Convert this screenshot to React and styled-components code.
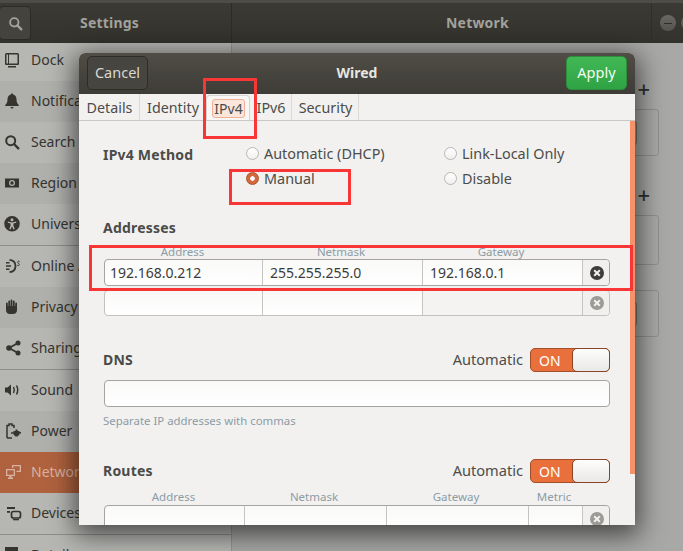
import React from "react";
import styled, { createGlobalStyle } from "styled-components";

const GlobalStyle = createGlobalStyle`
	html, body {
		margin: 0;
		padding: 0;
		background: #a8a8a6;
	}

	* {
		box-sizing: border-box;
	}
`;

const Screen = styled.div`
	position: relative;
	width: 683px;
	height: 551px;
	overflow: hidden;
	font-family: "Noto Sans", "Open Sans", sans-serif;
	font-size: 14px;
	color: #4c4c4a;
`;

const SettingsWindow = styled.div`
	width: 700px;
	height: 551px;
	display: flex;
	flex-direction: column;
	border-top: 3px solid #4d4c48;
`;

const TitleBar = styled.header`
	height: 40px;
	flex-shrink: 0;
	display: flex;
	background: linear-gradient( #3b3a35, #33322d );
	color: #a3a29b;
	font-weight: 700;
`;

const TitleLeft = styled.div`
	width: 232px;
	display: flex;
	align-items: center;
	border-right: 1px solid #2c2b27;
`;

const SearchButton = styled.div`
	width: 32px;
	height: 34px;
	margin-left: -1px;
	display: flex;
	align-items: center;
	justify-content: center;
	background: #45433e;
	border: 1px solid #2b2a26;
	border-radius: 4px;
`;

const TitleText = styled.span`
	margin: -2px 0 0 ${ props => props.$offset }px;
	letter-spacing: 0.2px;
`;

const TitleRight = styled.div`
	flex: 1;
	display: flex;
	align-items: center;
	justify-content: space-between;
`;

const WindowControls = styled.div`
	height: 100%;
	display: flex;
	align-items: center;
	gap: 5px;
	padding: 0 3px 0 8px;
	border-left: 1px solid #2f2e2a;
`;

const WindowButton = styled.div`
	width: 16px;
	height: 16px;
	border-radius: 50%;
	display: flex;
	align-items: center;
	justify-content: center;
	background: linear-gradient( #6a6862, #55534d );
`;

const MinimizeMark = styled.span`
	width: 8px;
	height: 1px;
	background: #2e2d29;
`;

const Body = styled.div`
	flex: 1;
	display: flex;
	min-height: 0;
`;

const Sidebar = styled.nav`
	width: 232px;
	flex-shrink: 0;
	overflow: hidden;
	background: #b6b6b3;
	border-right: 1px solid #96968f;
`;

// The list is scrolled down by a few pixels in the screenshot.
const SidebarList = styled.div`
	margin-top: -3px;
`;

const rowBackground = props => {
	if ( props.$selected ) {
		return "#b0623f";
	}
	return props.$tinted ? "#afafac" : "transparent";
};

const SidebarRow = styled.div`
	height: ${ props => props.$divided ? 42 : 41 }px;
	display: flex;
	align-items: center;
	gap: 12px;
	padding: 0 5px 2px;
	color: ${ props => props.$selected ? "#d8b2a0" : "#35342f" };
	background: ${ rowBackground };
	border-bottom: ${ props => props.$divided ? "1px solid #8f8f8a" : "none" };
`;

const RowIcon = styled.svg`
	width: 14px;
	height: 16px;
	flex-shrink: 0;
	overflow: visible;
	fill: currentColor;
	stroke: none;
`;

const RowChevron = styled.span`
	margin-left: auto;
	margin-right: 18px;
`;

const Main = styled.main`
	flex: 1;
	padding-top: 39px;
	background: #a8a8a6;
`;

const BackColumn = styled.div`
	width: 427px;
	display: flex;
	flex-direction: column;
`;

const PlusRow = styled.div`
	height: 14px;
	margin-top: ${ props => props.$gap }px;
	margin-bottom: 13px;
	padding: 0 9px 2px 0;
	display: flex;
	justify-content: flex-end;
	align-items: center;
	color: #2f2f2c;
	font-size: 22px;
	font-weight: 500;
`;

const BackPanel = styled.div`
	height: ${ props => props.$height }px;
	margin-top: ${ props => props.$gap || 0 }px;
	display: flex;
	align-items: center;
	justify-content: flex-end;
	padding-right: 21px;
	border: 1px solid #8f8f8c;
	border-radius: 3px;
`;

const BackButton = styled.div`
	width: 20px;
	height: 24px;
	border: 1px solid #77776f;
	border-radius: 3px;
`;

const Dialog = styled.section`
	position: absolute;
	left: 79px;
	top: 53px;
	width: 556px;
	height: 472px;
	display: flex;
	flex-direction: column;
	overflow: hidden;
	border-radius: 6px 6px 0 0;
	background: #f2f1ef;
	box-shadow: 0 6px 26px 4px rgba( 0, 0, 0, 0.6 );
`;

const DialogHeader = styled.header`
	height: 41px;
	flex-shrink: 0;
	display: flex;
	align-items: center;
	justify-content: space-between;
	padding: 0 8px;
	background: linear-gradient( #504d46, #3e3c37 );
`;

const HeaderButton = styled.button`
	width: 61px;
	height: 34px;
	padding: 0 0 2px;
	margin-top: -2px;
	font: inherit;
	font-size: 14.5px;
	color: ${ props => props.$suggested ? "#f4fbf3" : "#d9d8d3" };
	background: ${ props => props.$suggested ? "linear-gradient( #41b854, #2fa344 )" : "#47453f" };
	border: 1px solid ${ props => props.$suggested ? "#2d8f3c" : "#2d2c28" };
	border-radius: 5px;
`;

const DialogTitle = styled.h2`
	margin: -2px 0 0;
	font-size: 14px;
	font-weight: 700;
	color: #e6e5e0;
`;

const TabBar = styled.div`
	height: 27px;
	flex-shrink: 0;
	display: flex;
	background: #f2f1ef;
	border-bottom: 1px solid #c9c8c4;
`;

const Tab = styled.div`
	width: ${ props => props.$width }px;
	display: flex;
	align-items: center;
	justify-content: center;
	padding-left: 1px;
	font-size: 14.3px;
	border-right: 1px solid #dbdad6;
	${ props => props.$active ? `
		margin-top: 1px;
		background: #f8f7f6;
		border: 1px solid #d5d4d0;
		border-bottom: none;
		border-radius: 4px 4px 0 0;
	` : "" }
`;

const TabFocus = styled.span`
	padding: 0 1px;
	line-height: 17px;
	background: #fbe6dc;
	border: 1px solid #f1b094;
	border-radius: 3px;
	font-size: 14px;
`;

const Form = styled.div`
	flex: 1;
	min-height: 0;
	padding: 20px 25px 0 24px;
	overflow: hidden;
`;

const ScrollThumb = styled.div`
	position: absolute;
	right: 0;
	top: 68px;
	width: 5px;
	height: 353px;
	background: #f5926a;
`;

const MethodGrid = styled.div`
	display: grid;
	grid-template-columns: 143px 198px 1fr;
	grid-auto-rows: 25px;
	align-items: center;
`;

const SectionTitle = styled.h3`
	margin: 0;
	font-size: 14px;
	line-height: 20px;
	font-weight: 700;
	color: #4b4b49;
	letter-spacing: 0.2px;
`;

const MethodTitle = styled( SectionTitle )`
	margin-top: 3px;
`;

const Addresses = styled( SectionTitle )`
	margin-top: 27px;
`;

const RadioOption = styled.label`
	display: flex;
	align-items: center;
	gap: 5px;
	font-size: 14.4px;
	grid-column: ${ props => props.$column };
`;

const RadioDot = styled.span`
	width: 13px;
	height: 13px;
	flex-shrink: 0;
	border-radius: 50%;
	background: ${ props => props.$checked ? "radial-gradient( circle, #fff 0 2px, #d4683a 2.5px )" : "linear-gradient( #fff, #f1f0ee )" };
	border: 1px solid ${ props => props.$checked ? "#a9522c" : "#b7b6b2" };
`;

const ColumnLabels = styled.div`
	display: grid;
	grid-template-columns: ${ props => props.$columns };
	height: 14px;
	margin: 7px 0 0 1px;
	font-size: 11.5px;
	line-height: 14px;
	text-align: center;
	color: #8c9ca6;
`;

const EntryRow = styled.div`
	display: grid;
	grid-template-columns: ${ props => props.$columns };
	height: ${ props => props.$height }px;
	margin: ${ props => props.$gap }px 0 0 1px;
	background: linear-gradient( #f9f9f8, #ffffff );
	border: 1px solid ${ props => props.$faded ? "#c2c1bd" : "#a5a4a0" };
	border-radius: 4px;
`;

const EntryCell = styled.div`
	display: flex;
	align-items: center;
	padding-left: ${ props => props.$first ? 5 : 7 }px;
	font-size: 14px;
	color: #3c3c3a;
	background: ${ props => props.$muted ? "#f4f3f2" : "transparent" };
	border-left: ${ props => props.$first ? "none" : "1px solid #c5c4c0" };
`;

const RemoveCell = styled.div`
	display: flex;
	align-items: center;
	justify-content: center;
	padding-left: 1px;
	background: #f1f0ee;
	border-left: 1px solid #c5c4c0;
	border-radius: 0 4px 4px 0;
`;

const RemoveIcon = styled.span`
	width: 14px;
	height: 14px;
	border-radius: 50%;
	display: flex;
	align-items: center;
	justify-content: center;
	background: ${ props => props.$faded ? "#9c9b97" : "#3c3c3a" };
	color: #f1f0ee;
`;

const SwitchRow = styled.div`
	display: flex;
	align-items: center;
	justify-content: space-between;
	height: 24px;
	margin: ${ props => props.$gap }px 0 0;
`;

const SwitchGroup = styled.div`
	display: flex;
	align-items: center;
	gap: 7px;
	font-size: 14.6px;
`;

const SwitchLabel = styled.span`
	margin-top: -2px;
`;

const Toggle = styled.div`
	width: 80px;
	height: 24px;
	display: flex;
	align-items: center;
	justify-content: space-between;
	padding-left: 8px;
	font-size: 14px;
	color: #fff;
	background: #e9703a;
	border: 1px solid #a04f2a;
	border-radius: 5px;
`;

const ToggleKnob = styled.span`
	width: 38px;
	height: 24px;
	margin-right: -1px;
	background: linear-gradient( #fdfdfc, #e9e8e6 );
	border: 1px solid #8a4426;
	border-radius: 5px;
`;

const HelpText = styled.div`
	height: 14px;
	margin-top: 7px;
	font-size: 11.4px;
	line-height: 14px;
	color: #8c9ca6;
`;

// Red boxes somebody drew on top of the screenshot.
const Annotation = styled.div`
	position: absolute;
	left: ${ props => props.$left }px;
	top: ${ props => props.$top }px;
	width: ${ props => props.$width }px;
	height: ${ props => props.$height }px;
	border: 3px solid #f93636;
`;

const ADDRESS_COLUMNS = "157px 160px 160px 1fr";
const ROUTE_COLUMNS = "139px 142px 142px 54px 1fr";

function DockIcon() {
	return (
		<RowIcon viewBox="0 0 14 16">
			<path fillRule="evenodd" d="M0 2.5A1.5 1.5 0 0 1 1.5 1h11A1.5 1.5 0 0 1 14 2.5V12a1 1 0 0 1-1 1H1a1 1 0 0 1-1-1zM1.5 2.5V11.5H3V2.5zM4 2.5V11.5H12.5V2.5zM3 14h8v1.5H3z" />
		</RowIcon>
	);
}

function BellIcon() {
	return (
		<RowIcon viewBox="0 0 14 16">
			<path d="M7 .5c.7 0 1.2.5 1.2 1.1C10.500 2.200 11.500 4 11.500 6.500c0 2.800.8 4.300 2.300 5.500v1H.2v-1c1.500-1.200 2.300-2.700 2.300-5.500C2.500 4 3.500 2.200 5.800 1.600 5.800 1 6.300.5 7 .5zM5.500 14h3a1.500 1.500 0 0 1-3 0z" />
		</RowIcon>
	);
}

function SearchIcon( { size = 14 } ) {
	return (
		<RowIcon viewBox="0 0 14 16" style={ { width: size, height: size + 2 } }>
			<circle cx="5.700" cy="6.700" r="4.500" fill="none" stroke="currentColor" strokeWidth="2" />
			<path d="M9 10l4.300 4.300" stroke="currentColor" strokeWidth="2.400" strokeLinecap="round" />
		</RowIcon>
	);
}

function RegionIcon() {
	return (
		<RowIcon viewBox="0 0 14 16">
			<path fillRule="evenodd" d="M0 3.500h14v9H0zM7 5a3 3 0 1 0 0 6 3 3 0 0 0 0-6zM7 6.300a1.700 1.700 0 1 1 0 3.400 1.700 1.700 0 0 1 0-3.400z" />
		</RowIcon>
	);
}

function UniversalIcon() {
	return (
		<RowIcon viewBox="0 0 14 16" style={ { width: 16, marginLeft: -1, marginRight: -1 } }>
			<path fillRule="evenodd" d="M7 0a7.500 7.500 0 1 1 0 15.500A7.500 7.500 0 0 1 7 0zM7 2.300a1.500 1.500 0 1 0 0 3 1.500 1.500 0 0 0 0-3zM2.800 5.500v1.300l2.800.8v2L4.300 13l1.200.4L7 10.200l1.500 3.200 1.200-.4-1.300-3.400v-2l2.800-.8V5.500L7 6.400z" />
		</RowIcon>
	);
}

function OnlineIcon() {
	return (
		<RowIcon viewBox="0 0 14 16" style={ { width: 16, marginRight: -2 } }>
			<path d="M0 4h3.500v1.500H0zM0 10.500h3.500V12H0zM0 7.200h5v1.500H0z" />
			<path d="M3.500 1.800C7.800 2.200 9.500 5 9.500 8s-1.700 5.800-6 6.200" fill="none" stroke="currentColor" strokeWidth="1.800" />
			<path d="M13.500 3.500c-1-.6-2-.2-1.800.8.200.9 1.800 1.200 1.600 2.400-.1 1-1.200 1.100-2.100.6" fill="none" stroke="currentColor" strokeWidth="1" />
		</RowIcon>
	);
}

function PrivacyIcon() {
	return (
		<RowIcon viewBox="0 0 14 16">
			<path d="M1 4.500a.9.900 0 0 1 1.800 0V7h.5V2.500a.9.900 0 0 1 1.800 0V7h.5V1.500a.9.900 0 0 1 1.800 0V7h.5V2.500a.9.900 0 0 1 1.800 0V7h.5V4.500a.9.900 0 0 1 1.800 0V11c0 2.500-1.500 4-4 4H5c-2.500 0-4-1.500-4-4z" />
		</RowIcon>
	);
}

function SharingIcon() {
	return (
		<RowIcon viewBox="0 0 14 16" style={ { width: 16, marginRight: -2 } }>
			<path d="M12 3L3 8l9 5" fill="none" stroke="currentColor" strokeWidth="1.800" />
			<circle cx="12" cy="3" r="2.500" />
			<circle cx="3" cy="8" r="2.800" />
			<circle cx="12" cy="13" r="2.500" />
		</RowIcon>
	);
}

function SoundIcon() {
	return (
		<RowIcon viewBox="0 0 14 16">
			<path d="M0 5.500h2.500L6 2.500v11l-3.500-3H0z" />
			<path d="M8.500 5c1 1.800 1 4.200 0 6" fill="none" stroke="currentColor" strokeWidth="1.500" />
			<path d="M11.500 3.500c1.500 2.800 1.500 6.200 0 9" fill="none" stroke="currentColor" strokeWidth="1.500" />
		</RowIcon>
	);
}

function PowerIcon() {
	return (
		<RowIcon viewBox="0 0 14 16" style={ { width: 16, marginRight: -2 } }>
			<path d="M1 15V2.500h2V1h3v1.500h2V5" fill="none" stroke="currentColor" strokeWidth="1.500" />
			<path d="M1 15h5" fill="none" stroke="currentColor" strokeWidth="1.500" />
			<path d="M7.500 8h2V6.500h2V8h2v1h1.500v1.500h-1.500v1l-2 2h-2l-2-2v-.7H5V9.300h2.500z" />
		</RowIcon>
	);
}

function NetworkIcon() {
	return (
		<RowIcon viewBox="0 0 14 16" style={ { width: 16, marginRight: -2 } }>
			<path fillRule="evenodd" d="M0 5h9v7H5.500v1.500H7V15H2v-1.500h1.500V12H0zM1.300 6.300v4.400h6.400V6.300z" />
			<path d="M6 1h9v7h-4.500V6.700h3.200V2.300H7.300V4H6z" />
		</RowIcon>
	);
}

function DevicesIcon() {
	return (
		<RowIcon viewBox="0 0 14 16" style={ { width: 16, marginRight: -2 } }>
			<path d="M1 2h8v2H1zM1 6h3v1.800H1z" />
			<rect x="5.500" y="6.500" width="9" height="6.500" rx="2" fill="none" stroke="currentColor" strokeWidth="1.700" />
			<path d="M7 14h6v1.300H7z" />
		</RowIcon>
	);
}

function DetailsIcon() {
	return (
		<RowIcon viewBox="0 0 14 16">
			<path d="M0 0h13v16H0z" />
		</RowIcon>
	);
}

const sidebarItems = [
	{ label: "Dock", icon: DockIcon },
	{ label: "Notifications", icon: BellIcon, tinted: true },
	{ label: "Search", icon: SearchIcon },
	{ label: "Region & Language", icon: RegionIcon, tinted: true },
	{ label: "Universal Access", icon: UniversalIcon, divided: true },
	{ label: "Online Accounts", icon: OnlineIcon },
	{ label: "Privacy", icon: PrivacyIcon, tinted: true },
	{ label: "Sharing", icon: SharingIcon, divided: true },
	{ label: "Sound", icon: SoundIcon },
	{ label: "Power", icon: PowerIcon, tinted: true },
	{ label: "Network", icon: NetworkIcon, selected: true },
	{ label: "Devices", icon: DevicesIcon, divided: true },
	{ label: "Details", icon: DetailsIcon, chevron: true },
];

const tabs = [
	{ label: "Details", width: 61 },
	{ label: "Identity", width: 66 },
	{ label: "IPv4", width: 44, active: true },
	{ label: "IPv6", width: 42 },
	{ label: "Security", width: 67 },
];

function RemoveButton( { faded } ) {
	return (
		<RemoveCell>
			<RemoveIcon $faded={ faded }>
				<svg width="8" height="8" viewBox="0 0 8 8">
					<path d="M1.200 1.200l5.600 5.600M6.800 1.200L1.200 6.800" stroke="currentColor" strokeWidth="2" />
				</svg>
			</RemoveIcon>
		</RemoveCell>
	);
}

function AutomaticSwitch( { title, gap } ) {
	return (
		<SwitchRow $gap={ gap }>
			<SectionTitle>{ title }</SectionTitle>
			<SwitchGroup>
				<SwitchLabel>Automatic</SwitchLabel>
				<Toggle>
					ON
					<ToggleKnob />
				</Toggle>
			</SwitchGroup>
		</SwitchRow>
	);
}

/**
 * The network settings window with the "Wired" connection dialog on top of it.
 *
 * @returns {ReactElement} The rendered page.
 */
export default function App() {
	return (
		<Screen>
			<GlobalStyle />
			<SettingsWindow>
				<TitleBar>
					<TitleLeft>
						<SearchButton>
							<SearchIcon size={ 13 } />
						</SearchButton>
						<TitleText $offset={ 49 }>Settings</TitleText>
					</TitleLeft>
					<TitleRight>
						<TitleText $offset={ 214 }>Network</TitleText>
						<WindowControls>
							<WindowButton><MinimizeMark /></WindowButton>
							<WindowButton />
						</WindowControls>
					</TitleRight>
				</TitleBar>
				<Body>
					<Sidebar>
						<SidebarList>
							{ sidebarItems.map( item => (
								<SidebarRow
									key={ item.label }
									$selected={ item.selected }
									$divided={ item.divided }
									$tinted={ item.tinted }
								>
									<item.icon />
									{ item.label }
									{ item.chevron && <RowChevron>›</RowChevron> }
								</SidebarRow>
							) ) }
						</SidebarList>
					</Sidebar>
					<Main>
						<BackColumn>
							<PlusRow $gap={ 0 }>+</PlusRow>
							<BackPanel $height={ 47 }><BackButton /></BackPanel>
							<PlusRow $gap={ 32 }>+</PlusRow>
							<BackPanel $height={ 50 } />
							<BackPanel $height={ 47 } $gap={ 25 }><BackButton /></BackPanel>
						</BackColumn>
					</Main>
				</Body>
			</SettingsWindow>

			<Dialog>
				<DialogHeader>
					<HeaderButton>Cancel</HeaderButton>
					<DialogTitle>Wired</DialogTitle>
					<HeaderButton $suggested>Apply</HeaderButton>
				</DialogHeader>
				<TabBar>
					{ tabs.map( tab => (
						<Tab key={ tab.label } $width={ tab.width } $active={ tab.active }>
							{ tab.active ? <TabFocus>{ tab.label }</TabFocus> : tab.label }
						</Tab>
					) ) }
				</TabBar>
				<Form>
					<MethodGrid>
						<MethodTitle>IPv4 Method</MethodTitle>
						<RadioOption $column={ 2 }><RadioDot />Automatic (DHCP)</RadioOption>
						<RadioOption $column={ 3 }><RadioDot />Link-Local Only</RadioOption>
						<RadioOption $column={ 2 }><RadioDot $checked />Manual</RadioOption>
						<RadioOption $column={ 3 }><RadioDot />Disable</RadioOption>
					</MethodGrid>

					<Addresses>Addresses</Addresses>
					<ColumnLabels $columns={ ADDRESS_COLUMNS }>
						<span>Address</span>
						<span>Netmask</span>
						<span>Gateway</span>
					</ColumnLabels>
					<EntryRow $columns={ ADDRESS_COLUMNS } $height={ 27 } $gap={ 0 }>
						<EntryCell $first>192.168.0.212</EntryCell>
						<EntryCell>255.255.255.0</EntryCell>
						<EntryCell>192.168.0.1</EntryCell>
						<RemoveButton />
					</EntryRow>
					<EntryRow $columns={ ADDRESS_COLUMNS } $height={ 26 } $gap={ 4 } $faded>
						<EntryCell $first />
						<EntryCell />
						<EntryCell $muted />
						<RemoveButton faded />
					</EntryRow>

					<AutomaticSwitch title="DNS" gap={ 32 } />
					<EntryRow $columns="1fr" $height={ 27 } $gap={ 8 } />
					<HelpText>Separate IP addresses with commas</HelpText>

					<AutomaticSwitch title="Routes" gap={ 31 } />
					<ColumnLabels $columns={ ROUTE_COLUMNS }>
						<span>Address</span>
						<span>Netmask</span>
						<span>Gateway</span>
						<span>Metric</span>
					</ColumnLabels>
					<EntryRow $columns={ ROUTE_COLUMNS } $height={ 27 } $gap={ 1 }>
						<EntryCell $first />
						<EntryCell />
						<EntryCell />
						<EntryCell />
						<RemoveButton faded />
					</EntryRow>
				</Form>
				<ScrollThumb />
			</Dialog>

			<Annotation $left={ 203 } $top={ 78 } $width={ 54 } $height={ 61 } />
			<Annotation $left={ 229 } $top={ 169 } $width={ 122 } $height={ 36 } />
			<Annotation $left={ 89 } $top={ 245 } $width={ 544 } $height={ 46 } />
		</Screen>
	);
}
